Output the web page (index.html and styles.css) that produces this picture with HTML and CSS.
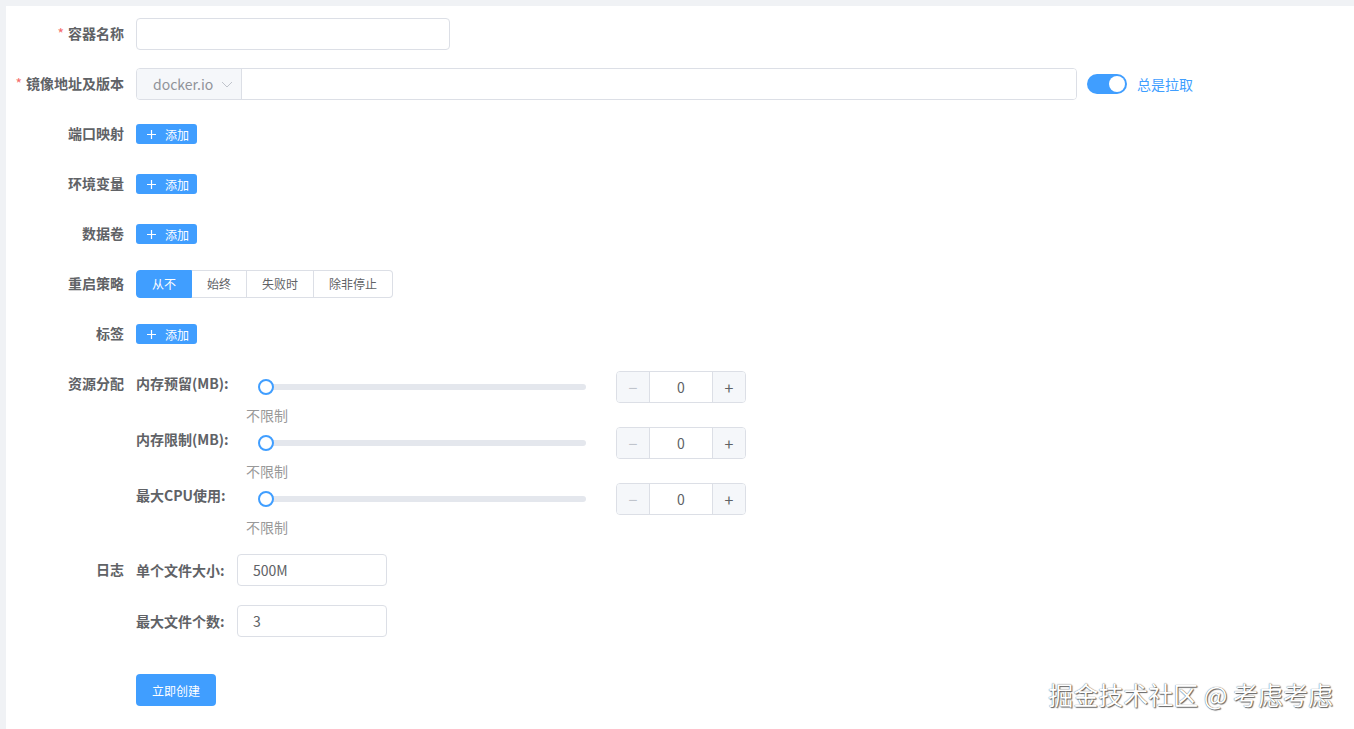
FILE: index.html
```html
<!DOCTYPE html>
<html lang="zh-CN">
<head>
  <meta charset="UTF-8">
  <title>创建容器</title>
  <link rel="stylesheet" href="styles.css">
</head>
<body>
  <div class="page">
    <form class="form">
      <!-- 容器名称 -->
      <div class="item first">
        <label class="label"><span class="star">*</span>容器名称</label>
        <div class="content">
          <input class="input name-input" type="text">
        </div>
      </div>

      <!-- 镜像 -->
      <div class="item">
        <label class="label"><span class="star">*</span>镜像地址及版本</label>
        <div class="content">
          <div class="input-group">
            <div class="prepend">
              docker.io
              <svg class="arrow" width="12" height="12" viewBox="0 0 12 12"><path d="M1 4 L6 9 L11 4" fill="none" stroke="#c0c4cc" stroke-width="1"/></svg>
            </div>
            <input class="group-input" type="text">
          </div>
          <span class="switch"><span class="knob"></span></span>
          <span class="switch-text">总是拉取</span>
        </div>
      </div>

      <div class="item">
        <label class="label">端口映射</label>
        <div class="content">
          <button type="button" class="btn-add"><svg width="9" height="9" viewBox="0 0 9 9"><path d="M4.5 0 V9 M0 4.5 H9" stroke="#fff" stroke-width="1.2"/></svg>添加</button>
        </div>
      </div>

      <div class="item">
        <label class="label">环境变量</label>
        <div class="content">
          <button type="button" class="btn-add"><svg width="9" height="9" viewBox="0 0 9 9"><path d="M4.5 0 V9 M0 4.5 H9" stroke="#fff" stroke-width="1.2"/></svg>添加</button>
        </div>
      </div>

      <div class="item">
        <label class="label">数据卷</label>
        <div class="content">
          <button type="button" class="btn-add"><svg width="9" height="9" viewBox="0 0 9 9"><path d="M4.5 0 V9 M0 4.5 H9" stroke="#fff" stroke-width="1.2"/></svg>添加</button>
        </div>
      </div>

      <div class="item">
        <label class="label">重启策略</label>
        <div class="content">
          <div class="radio-group">
            <span class="radio active">从不</span>
            <span class="radio">始终</span>
            <span class="radio">失败时</span>
            <span class="radio">除非停止</span>
          </div>
        </div>
      </div>

      <div class="item">
        <label class="label">标签</label>
        <div class="content">
          <button type="button" class="btn-add"><svg width="9" height="9" viewBox="0 0 9 9"><path d="M4.5 0 V9 M0 4.5 H9" stroke="#fff" stroke-width="1.2"/></svg>添加</button>
        </div>
      </div>

      <!-- 资源分配 -->
      <div class="item">
        <label class="label">资源分配</label>
        <div class="sub-list">
          <div class="res-block">
            <div class="res-row">
              <span class="sub-label res-label">内存预留(MB):</span>
              <div class="slider-area">
                <div class="runway"><span class="thumb"></span></div>
                <div class="stepper">
                  <span class="step minus">&minus;</span>
                  <span class="step-val">0</span>
                  <span class="step plus">+</span>
                </div>
              </div>
            </div>
            <div class="hint">不限制</div>
          </div>
          <div class="res-block">
            <div class="res-row">
              <span class="sub-label res-label">内存限制(MB):</span>
              <div class="slider-area">
                <div class="runway"><span class="thumb"></span></div>
                <div class="stepper">
                  <span class="step minus">&minus;</span>
                  <span class="step-val">0</span>
                  <span class="step plus">+</span>
                </div>
              </div>
            </div>
            <div class="hint">不限制</div>
          </div>
          <div class="res-block">
            <div class="res-row">
              <span class="sub-label res-label">最大CPU使用:</span>
              <div class="slider-area">
                <div class="runway"><span class="thumb"></span></div>
                <div class="stepper">
                  <span class="step minus">&minus;</span>
                  <span class="step-val">0</span>
                  <span class="step plus">+</span>
                </div>
              </div>
            </div>
            <div class="hint">不限制</div>
          </div>
        </div>
      </div>

      <!-- 日志 -->
      <div class="item">
        <label class="label">日志</label>
        <div class="sub-list">
          <div class="log-row">
            <span class="sub-label log-label">单个文件大小:</span>
            <input class="input log-input" type="text" value="500M">
          </div>
          <div class="log-row">
            <span class="sub-label log-label">最大文件个数:</span>
            <input class="input log-input" type="text" value="3">
          </div>
        </div>
      </div>

      <div class="item submit-row">
        <span class="label"></span>
        <button type="button" class="btn-submit">立即创建</button>
      </div>
    </form>

    <div class="watermark">掘金技术社区 @ 考虑考虑</div>
  </div>
</body>
</html>
```

FILE: styles.css
```css
body {
  margin: 0;
  background: #f0f2f5;
  font-family: "Noto Sans CJK SC", "Liberation Sans", sans-serif;
  color: #606266;
}

.page {
  position: relative;
  margin: 6px 0 0 6px;
  min-height: calc(100vh - 6px);
  background: #fff;
  padding-top: 12px;
  box-sizing: border-box;
}

.item {
  display: flex;
  margin-bottom: 18px;
}

.label {
  width: 130px;
  flex-shrink: 0;
  box-sizing: border-box;
  padding-right: 12px;
  text-align: right;
  line-height: 31px;
  font-size: 14px;
  font-weight: bold;
  color: #606266;
}

.star {
  color: #f56c6c;
  margin-right: 4px;
  font-weight: normal;
}

.content {
  display: flex;
  align-items: center;
  min-height: 32px;
}

.input {
  height: 32px;
  box-sizing: border-box;
  border: 1px solid #dcdfe6;
  border-radius: 4px;
  padding: 0 15px;
  font: inherit;
  font-size: 14px;
  color: #606266;
  outline: none;
}

.name-input {
  width: 314px;
}

.input-group {
  display: flex;
  width: 941px;
  height: 32px;
  box-sizing: border-box;
  border: 1px solid #dcdfe6;
  border-radius: 4px;
  overflow: hidden;
}

.prepend {
  width: 105px;
  box-sizing: border-box;
  background: #f5f7fa;
  border-right: 1px solid #dcdfe6;
  padding-left: 16px;
  display: flex;
  align-items: center;
  font-size: 14px;
  color: #909399;
}

.arrow {
  margin-left: 8px;
}

.group-input {
  flex: 1;
  border: none;
  outline: none;
}

.switch {
  position: relative;
  display: inline-block;
  width: 40px;
  height: 20px;
  border-radius: 10px;
  background: #409eff;
  margin-left: 10px;
}

.knob {
  position: absolute;
  top: 2px;
  right: 2px;
  width: 16px;
  height: 16px;
  border-radius: 50%;
  background: #fff;
}

.switch-text {
  margin-left: 10px;
  font-size: 14px;
  color: #409eff;
}

.btn-add {
  display: inline-flex;
  align-items: center;
  gap: 9px;
  height: 20px;
  padding: 0 8px 0 11px;
  border: none;
  border-radius: 3px;
  background: #409eff;
  color: #fff;
  font: inherit;
  font-size: 12px;
}

.radio-group {
  display: flex;
}

.radio {
  height: 28px;
  line-height: 26px;
  box-sizing: border-box;
  padding: 0 15px;
  border: 1px solid #dcdfe6;
  border-left: none;
  font-size: 12px;
  color: #606266;
}

.radio:first-child {
  border-left: 1px solid #dcdfe6;
  border-radius: 4px 0 0 4px;
}

.radio:last-child {
  border-radius: 0 4px 4px 0;
}

.radio.active {
  background: #409eff;
  border-color: #409eff;
  color: #fff;
}

.sub-label {
  flex-shrink: 0;
  line-height: 31px;
  font-size: 14px;
  font-weight: bold;
  color: #606266;
}

.res-label {
  width: 110px;
}

.res-row {
  display: flex;
  align-items: flex-start;
}

.slider-area {
  display: flex;
  align-items: center;
  height: 38px;
  padding-left: 20px;
}

.runway {
  position: relative;
  width: 320px;
  height: 6px;
  border-radius: 3px;
  background: #e4e7ed;
}

.thumb {
  position: absolute;
  left: -8px;
  top: -5px;
  width: 12px;
  height: 12px;
  border: 2px solid #409eff;
  border-radius: 50%;
  background: #fff;
}

.stepper {
  display: flex;
  width: 130px;
  height: 32px;
  box-sizing: border-box;
  margin-left: 30px;
  border: 1px solid #dcdfe6;
  border-radius: 4px;
  overflow: hidden;
}

.step {
  width: 32px;
  background: #f5f7fa;
  text-align: center;
  line-height: 30px;
  font-size: 16px;
}

.minus {
  border-right: 1px solid #dcdfe6;
  color: #c0c4cc;
}

.plus {
  border-left: 1px solid #dcdfe6;
  color: #606266;
}

.step-val {
  flex: 1;
  text-align: center;
  line-height: 30px;
  font-size: 14px;
}

.hint {
  margin-left: 110px;
  line-height: 18px;
  font-size: 14px;
  color: #999;
}

.log-row {
  display: flex;
  align-items: center;
}

.log-row + .log-row {
  margin-top: 19px;
}

.log-label {
  width: 101px;
}

.log-input {
  width: 150px;
}

.submit-row {
  padding-top: 19px;
}

.btn-submit {
  width: 80px;
  height: 32px;
  border: none;
  border-radius: 4px;
  background: #409eff;
  color: #fff;
  font: inherit;
  font-size: 12px;
}

.watermark {
  position: absolute;
  right: 21px;
  bottom: 22px;
  font-size: 25px;
  line-height: 26px;
  color: #fff;
  text-shadow: 0 0 1px #444, 1px 1px 1px #666;
}
```
